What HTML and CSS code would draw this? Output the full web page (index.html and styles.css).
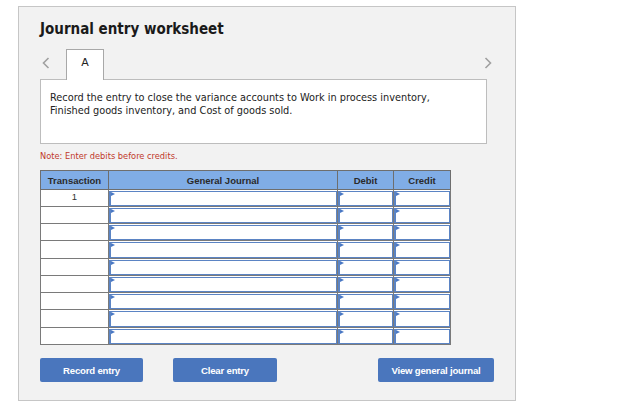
FILE: index.html
```html
<!DOCTYPE html>
<html>
<head>
<meta charset="utf-8">
<link rel="stylesheet" href="styles.css">
</head>
<body>
<div class="panel">
  <h1 class="title">Journal entry worksheet</h1>
  <div class="tabs">
    <span class="arrow arrow-left"><svg width="8" height="12" viewBox="0 0 8 12"><polyline points="6.5,1 1.5,6 6.5,11" fill="none" stroke="#a0a0a0" stroke-width="1.6"/></svg></span>
    <div class="tab">A</div>
    <span class="spacer"></span>
    <span class="arrow arrow-right"><svg width="8" height="12" viewBox="0 0 8 12"><polyline points="1.5,1 6.5,6 1.5,11" fill="none" stroke="#a0a0a0" stroke-width="1.6"/></svg></span>
  </div>
  <div class="prompt">Record the entry to close the variance accounts to Work in process inventory,<br>Finished goods inventory, and Cost of goods sold.</div>
  <div class="note">Note: Enter debits before credits.</div>
  <table class="journal">
    <thead>
      <tr><th class="c-tr">Transaction</th><th class="c-gj">General Journal</th><th class="c-dr">Debit</th><th class="c-cr">Credit</th></tr>
    </thead>
    <tbody>
      <tr class="r17"><td class="tr">1</td><td><div class="field"></div></td><td><div class="field"></div></td><td><div class="field"></div></td></tr>
      <tr class="r17"><td class="tr"></td><td><div class="field"></div></td><td><div class="field"></div></td><td><div class="field"></div></td></tr>
      <tr class="r17"><td class="tr"></td><td><div class="field"></div></td><td><div class="field"></div></td><td><div class="field"></div></td></tr>
      <tr class="r18"><td class="tr"></td><td><div class="field"></div></td><td><div class="field"></div></td><td><div class="field"></div></td></tr>
      <tr class="r17"><td class="tr"></td><td><div class="field"></div></td><td><div class="field"></div></td><td><div class="field"></div></td></tr>
      <tr class="r17"><td class="tr"></td><td><div class="field"></div></td><td><div class="field"></div></td><td><div class="field"></div></td></tr>
      <tr class="r17"><td class="tr"></td><td><div class="field"></div></td><td><div class="field"></div></td><td><div class="field"></div></td></tr>
      <tr class="r18"><td class="tr"></td><td><div class="field"></div></td><td><div class="field"></div></td><td><div class="field"></div></td></tr>
      <tr class="r17"><td class="tr"></td><td><div class="field"></div></td><td><div class="field"></div></td><td><div class="field"></div></td></tr>
    </tbody>
  </table>
  <div class="buttons">
    <button class="btn btn-record">Record entry</button>
    <button class="btn btn-clear">Clear entry</button>
    <button class="btn btn-view">View general journal</button>
  </div>
</div>
</body>
</html>
```
FILE: styles.css
```css
* { box-sizing: border-box; }
html, body { margin: 0; padding: 0; background: #ffffff; }
body { font-family: "DejaVu Sans Condensed", "DejaVu Sans", sans-serif; color: #222; }

.panel {
  margin: 6px 0 0 18px;
  width: 498px;
  height: 395px;
  background: #f2f2f2;
  border: 1px solid #c6c6c6;
  padding: 13px 0 0 21px;
}

.title {
  margin: 0;
  font-size: 15px;
  line-height: 18px;
  font-weight: bold;
  color: #1a1a1a;
}

.tabs {
  display: flex;
  align-items: flex-start;
  width: 452px;
  margin-top: 11px;
}
.arrow { display: flex; margin-top: 8px; }
.arrow-left { margin-left: 2px; width: 24px; }
.spacer { flex: 1; }
.tab {
  position: relative;
  z-index: 1;
  width: 38px;
  height: 31px;
  margin-bottom: -1px;
  background: #fff;
  border: 1px solid #a8a8a8;
  border-bottom: none;
  text-align: center;
  font-size: 11px;
  padding-top: 6px;
  color: #222;
  font-family: "DejaVu Sans", sans-serif;
}

.prompt {
  width: 447px;
  height: 65px;
  background: #fff;
  border: 1px solid #bdbdbd;
  padding: 11px 0 0 9px;
  font-size: 10.85px;
  line-height: 13px;
  color: #222;
}

.note {
  margin-top: 6px;
  font-size: 9.2px;
  line-height: 11px;
  color: #c0392b;
}

.journal {
  margin-top: 9px;
  border-collapse: collapse;
  table-layout: fixed;
  width: 410px;
  border: 1px solid #6e6e6e;
  font-family: "Liberation Sans", Arial, sans-serif;
}
.journal th {
  height: 19px;
  background: #80ade6;
  font-size: 9.5px;
  font-weight: bold;
  color: #2a2a2a;
  border: 1px solid #6e6e6e;
  border-left: 1px solid #2b2b2b;
  padding: 0;
}
.journal th.c-tr { border-left-color: #6e6e6e; }
.c-tr { width: 68px; }
.c-gj { width: 229px; }
.c-dr { width: 56px; }
.c-cr { width: 57px; }

.journal td {
  padding: 0;
  border: 1px solid #7a7a7a;
  background: #fff;
}
.r17 td { height: 17px; }
.r18 td { height: 18px; }
.journal td.tr {
  text-align: center;
  vertical-align: top;
  font-size: 9.5px;
  line-height: 13px;
  color: #333;
}
.field {
  position: relative;
  height: 100%;
  min-height: 15px;
  border: 1px solid #5b84c4;
  border-left-width: 2px;
  background: #fff;
}
.r17 .field { height: 15px; }
.r18 .field { height: 16px; }
.field::before {
  content: "";
  position: absolute;
  left: 0;
  top: 0;
  border-top: 2.5px solid transparent;
  border-bottom: 2.5px solid transparent;
  border-left: 4px solid #4a78c4;
}

.buttons {
  display: flex;
  margin-top: 13px;
}
.btn {
  height: 24px;
  border: none;
  border-radius: 2px;
  background: #4a76bd;
  color: #fff;
  font-family: "Liberation Sans", Arial, sans-serif;
  font-weight: bold;
  font-size: 9.6px;
  padding: 0;
  letter-spacing: -0.2px;
}
.btn-record { width: 103px; }
.btn-clear { width: 104px; margin-left: 30px; }
.btn-view { width: 116px; margin-left: 101px; }
```
